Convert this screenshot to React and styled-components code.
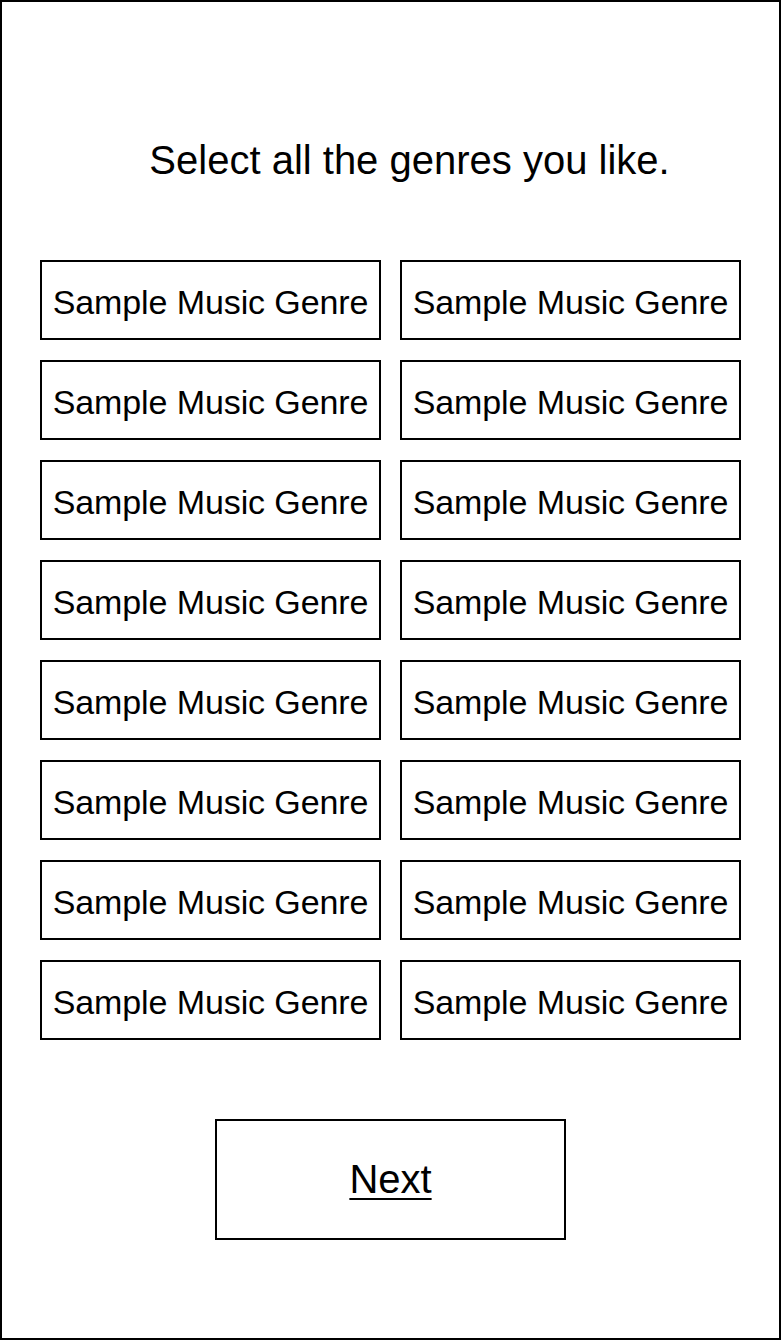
import React from "react";
import styled, { createGlobalStyle } from "styled-components";

const GlobalStyle = createGlobalStyle`
  html, body {
    margin: 0;
    padding: 0;
    background: #fff;
  }
  body {
    font-family: "Liberation Sans", Arial, sans-serif;
    color: #000;
  }
`;

const Frame = styled.div`
  box-sizing: border-box;
  width: 781px;
  height: 1340px;
  border: 2px solid #000;
  display: flex;
  flex-direction: column;
  align-items: center;
`;

const Title = styled.h1`
  margin: 135px 0 0 38px;
  font-size: 40px;
  font-weight: normal;
  line-height: 46px;
`;

const GenreGrid = styled.div`
  margin-top: 77px;
  display: grid;
  grid-template-columns: 341px 341px;
  grid-auto-rows: 80px;
  column-gap: 19px;
  row-gap: 20px;
`;

const GenreBox = styled.button`
  box-sizing: border-box;
  border: 2px solid #000;
  background: #fff;
  font-family: "Liberation Sans", Arial, sans-serif;
  font-size: 34px;
  letter-spacing: -0.1px;
  color: #000;
  padding: 4px 0 0 0;
  white-space: nowrap;
  cursor: pointer;
  display: flex;
  align-items: center;
  justify-content: center;
`;

const NextButton = styled.button`
  box-sizing: border-box;
  margin-top: 79px;
  width: 351px;
  height: 121px;
  border: 2px solid #000;
  background: #fff;
  font-family: "Liberation Sans", Arial, sans-serif;
  font-size: 40px;
  color: #000;
  text-decoration: underline;
  text-decoration-thickness: 2px;
  text-underline-offset: 5px;
  cursor: pointer;
`;

const genres = Array.from({ length: 16 }, () => "Sample Music Genre");

const App = () => {
  return (
    <>
      <GlobalStyle />
      <Frame>
        <Title>Select all the genres you like.</Title>
        <GenreGrid>
          {genres.map((g, i) => (
            <GenreBox key={i}>{g}</GenreBox>
          ))}
        </GenreGrid>
        <NextButton>Next</NextButton>
      </Frame>
    </>
  );
};

export default App;
